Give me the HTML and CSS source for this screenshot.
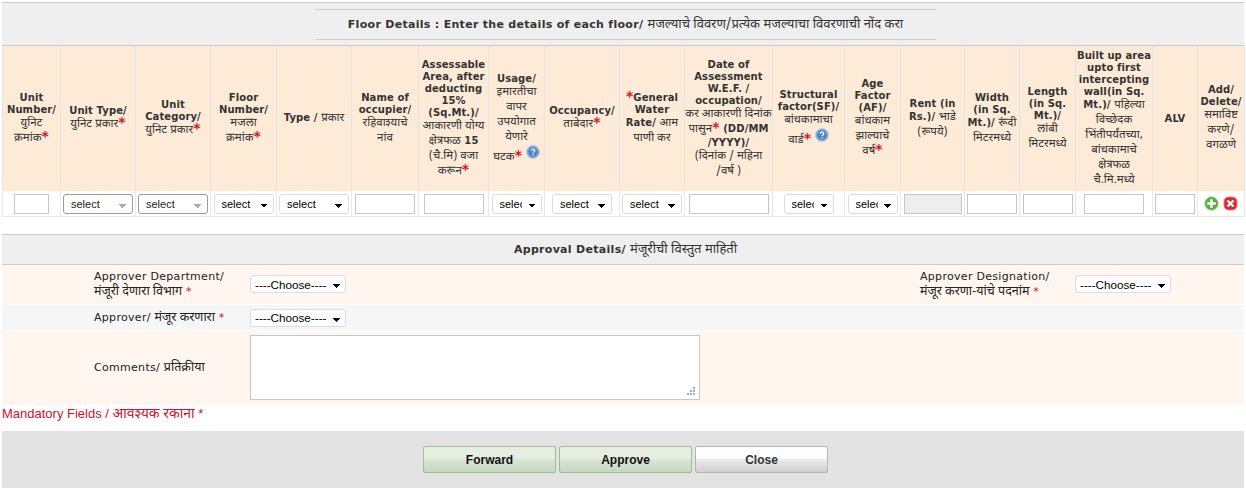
FILE: index.html
```html
<!DOCTYPE html>
<html lang="mr">
<head>
    <meta charset="UTF-8">
    <title>Floor Details</title>
    <link rel="stylesheet" href="styles.css">
</head>
<body>

<div class="band floor-band">
    <div class="band-title">Floor Details : Enter the details of each floor/ <span class="mr">मजल्याचे विवरण/प्रत्येक मजल्याचा विवरणाची नोंद करा</span></div>
</div>

<table class="floor-table">
    <colgroup>
        <col class="w58"><col class="w75"><col class="w75"><col class="w66"><col class="w75"><col class="w67">
        <col class="w70"><col class="w56"><col class="w75"><col class="w65"><col class="w88"><col class="w72">
        <col class="w56"><col class="w64"><col class="w55"><col class="w56"><col class="w77"><col class="w45"><col class="w47">
    </colgroup>
    <thead>
        <tr>
            <th>Unit Number/<br><span class="mr">युनिट<br>क्रमांक</span><b class="star">*</b></th>
            <th>Unit Type/<br><span class="mr">युनिट प्रकार</span><b class="star">*</b></th>
            <th>Unit Category/<br><span class="mr">युनिट प्रकार</span><b class="star">*</b></th>
            <th>Floor Number/<br><span class="mr">मजला<br>क्रमांक</span><b class="star">*</b></th>
            <th>Type / <span class="mr">प्रकार</span></th>
            <th>Name of occupier/<br><span class="mr">रहिवाश्याचे<br>नांव</span></th>
            <th>Assessable Area, after deducting 15% (Sq.Mt.)/<br><span class="mr">आकारणी योग्य<br>क्षेत्रफळ</span> 15<br><span class="mr">(चै.मि) वजा<br>करून</span><b class="star">*</b></th>
            <th>Usage/<br><span class="mr">इमारतीचा<br>वापर<br>उपयोगात<br>येणारे<br>घटक</span><b class="star">*</b>
                <svg class="help" viewBox="0 0 14 14"><circle cx="7" cy="7" r="6.5" fill="#7ea6d8" stroke="#b9cfe8"/><circle cx="7" cy="7" r="4.6" fill="#4f83c4"/><path d="M5.3 5.6c.2-1 .9-1.4 1.8-1.4 1 0 1.7.6 1.7 1.4 0 1.2-1.6 1.2-1.6 2.4" fill="none" stroke="#fff" stroke-width="1.2"/><rect x="6.5" y="8.9" width="1.3" height="1.3" fill="#fff"/></svg>
            </th>
            <th>Occupancy/<br><span class="mr">ताबेदार</span><b class="star">*</b></th>
            <th><b class="star">*</b>General Water Rate/ <span class="mr">आम<br>पाणी कर</span></th>
            <th>Date of Assessment W.E.F. / occupation/<br><span class="mr">कर आकारणी दिनांक<br>पासुन</span><b class="star">*</b> (DD/MM<br>/YYYY)/<br><span class="mr">(दिनांक / महिना<br>/वर्ष )</span></th>
            <th>Structural factor(SF)/<br><span class="mr">बांधकामाचा<br>वार्ड</span><b class="star">*</b>
                <svg class="help" viewBox="0 0 14 14"><circle cx="7" cy="7" r="6.5" fill="#7ea6d8" stroke="#b9cfe8"/><circle cx="7" cy="7" r="4.6" fill="#4f83c4"/><path d="M5.3 5.6c.2-1 .9-1.4 1.8-1.4 1 0 1.7.6 1.7 1.4 0 1.2-1.6 1.2-1.6 2.4" fill="none" stroke="#fff" stroke-width="1.2"/><rect x="6.5" y="8.9" width="1.3" height="1.3" fill="#fff"/></svg>
            </th>
            <th>Age Factor (AF)/<br><span class="mr">बांधकाम<br>झाल्याचे<br>वर्ष</span><b class="star">*</b></th>
            <th>Rent (in Rs.)/ <span class="mr">भाडे<br>(रूपये)</span></th>
            <th>Width<br>(in Sq.<br>Mt.)/ <span class="mr">रूंदी<br>मिटरमध्ये</span></th>
            <th>Length (in Sq. Mt.)/<br><span class="mr">लांबी<br>मिटरमध्ये</span></th>
            <th>Built up area upto first intercepting wall(in Sq. Mt.)/ <span class="mr">पहिल्या<br>विच्छेदक<br>भिंतीपर्यंतच्या,<br>बांधकामाचे<br>क्षेत्रफळ<br>चै.मि.मध्ये</span></th>
            <th>ALV</th>
            <th>Add/ Delete/<br><span class="mr">समाविष्ट<br>करणे/<br>वगळणे</span></th>
        </tr>
    </thead>
    <tbody>
        <tr>
            <td><input class="in w35" type="text"></td>
            <td><select class="sel w70 off" disabled><option>select</option></select></td>
            <td><select class="sel w70 off" disabled><option>select</option></select></td>
            <td><select class="sel w60"><option>select</option></select></td>
            <td><select class="sel w70"><option>select</option></select></td>
            <td><input class="in w60" type="text"></td>
            <td><input class="in w60" type="text"></td>
            <td><select class="sel w50 tight"><option>select</option></select></td>
            <td><select class="sel w60"><option>select</option></select></td>
            <td><select class="sel w60"><option>select</option></select></td>
            <td><input class="in w80" type="text"></td>
            <td><select class="sel w50 tight"><option>select</option></select></td>
            <td><select class="sel w50 tight"><option>select</option></select></td>
            <td><input class="in w58i" type="text" disabled></td>
            <td><input class="in w50i" type="text"></td>
            <td><input class="in w50i" type="text"></td>
            <td><input class="in w60" type="text"></td>
            <td><input class="in w40" type="text"></td>
            <td class="actions">
                <svg class="act" viewBox="0 0 16 16"><circle cx="8" cy="8" r="7.2" fill="#5cab45" stroke="#a6d596"/><path d="M8 3.5v9M3.5 8h9" stroke="#fff" stroke-width="2.6"/></svg>
                <svg class="act" viewBox="0 0 16 16"><rect x="1" y="1" width="14" height="14" rx="5" fill="#e0262c" stroke="#f08a8a"/><path d="M4.8 4.8l6.4 6.4M11.2 4.8l-6.4 6.4" stroke="#fff" stroke-width="2.6"/></svg>
            </td>
        </tr>
    </tbody>
</table>

<div class="band approval-band">
    <div class="band-title plain">Approval Details/ <span class="mr">मंजूरीची विस्तुत माहिती</span></div>
</div>

<table class="approval-table">
    <colgroup>
        <col class="a-gap"><col class="a-label"><col class="a-field"><col class="a-label2"><col class="a-rest">
    </colgroup>
    <tr class="row-peach">
        <td></td>
        <td>Approver Department/<br><span class="mr">मंजूरी देणारा विभाग</span> <span class="req">*</span></td>
        <td><select class="sel choose"><option>----Choose----</option></select></td>
        <td>Approver Designation/<br><span class="mr">मंजूर करणा-यांचे पदनांम</span> <span class="req">*</span></td>
        <td><select class="sel choose"><option>----Choose----</option></select></td>
    </tr>
    <tr class="row-grey">
        <td></td>
        <td>Approver/ <span class="mr">मंजूर करणारा</span> <span class="req">*</span></td>
        <td><select class="sel choose"><option>----Choose----</option></select></td>
        <td colspan="2"></td>
    </tr>
    <tr class="row-peach row-comments">
        <td></td>
        <td>Comments/ <span class="mr">प्रतिक्रीया</span></td>
        <td><textarea class="comments"></textarea></td>
        <td colspan="2"></td>
    </tr>
</table>

<p class="mandatory">Mandatory Fields / <span class="mr">आवश्यक रकाना</span> *</p>

<div class="button-bar">
    <button class="btn green" type="button">Forward</button>
    <button class="btn green" type="button">Approve</button>
    <button class="btn" type="button">Close</button>
</div>

</body>
</html>
```

FILE: styles.css
```css
* {
    box-sizing: border-box;
}

body {
    margin: 0;
    padding: 2px 2px 0;
    background: #fff;
    color: #333;
    font-family: "DejaVu Sans", Verdana, sans-serif;
    font-size: 10px;
}

.mr {
    font-family: "Noto Sans Devanagari", "Noto Sans", "DejaVu Sans", sans-serif;
    font-size: 11.5px;
    font-weight: normal;
    line-height: 15px;
    letter-spacing: 0;
}

/* title bands */
.band {
    background: #efefef;
    border-top: 1px solid #ccc;
    border-bottom: 1px solid #ccc;
    font-weight: bold;
    font-size: 11px;
    letter-spacing: 0.3px;
    text-align: center;
}

.band .mr {
    font-size: 13px;
}

.floor-band {
    height: 44px;
    padding: 6px 0 0 313px;
}

.band-title {
    width: 621px;
    height: 31px;
    border-top: 1px solid #ccc;
    border-bottom: 1px solid #ccc;
    line-height: 30px;
    color: #333;
}

.band-title.plain {
    width: auto;
    padding-left: 5px;
    border: none;
}

.approval-band {
    height: 31px;
    margin-top: 17px;
    color: #333;
}

/* floor table */
.floor-table {
    width: 1242px;
    table-layout: fixed;
    border-collapse: collapse;
}

.w58 { width: 58px; }
.w75 { width: 75px; }
.w66 { width: 66px; }
.w67 { width: 67px; }
.w70 { width: 70px; }
.w56 { width: 56px; }
.w65 { width: 65px; }
.w88 { width: 88px; }
.w72 { width: 72px; }
.w64 { width: 64px; }
.w55 { width: 55px; }
.w77 { width: 77px; }
.w45 { width: 45px; }
.w47 { width: 47px; }

.floor-table th {
    height: 145px;
    padding: 0;
    background: #fdebd8;
    border-left: 1px solid #e4e4e4;
    border-right: 1px solid #e4e4e4;
    font-size: 10px;
    letter-spacing: 0.1px;
    line-height: 12px;
    color: #333;
    text-align: center;
    vertical-align: middle;
    word-wrap: break-word;
}

.floor-table td {
    height: 25px;
    padding: 1px 0 0;
    border: 1px solid #e8e8e8;
    border-top: none;
    text-align: center;
    white-space: nowrap;
}

.star {
    color: #e0111c;
    font-size: 14px;
    line-height: 10px;
}

.help {
    width: 14px;
    height: 14px;
    vertical-align: 1px;
}

.act {
    width: 15px;
    height: 15px;
    vertical-align: middle;
}

/* form controls */
.in, .sel, .comments {
    margin: 0;
    background-color: #fff;
    border: 1px solid #c6c6c6;
    border-radius: 0;
    vertical-align: middle;
}

.in {
    height: 20px;
    padding: 0 2px;
}

.in:disabled {
    background: #eeeeee;
}

.in.w35 { width: 35px; }
.in.w60 { width: 60px; }
.in.w80 { width: 80px; }
.in.w58i { width: 58px; }
.in.w50i { width: 50px; }
.in.w40 { width: 40px; }

.sel {
    appearance: none;
    height: 20px;
    padding: 0 14px 0 7px;
    border: 1px solid #d8dde6;
    border-radius: 3px;
    color: #000;
    opacity: 1;
    font-family: "Liberation Sans", Arial, sans-serif;
    font-size: 11px;
    background-image: linear-gradient(45deg, transparent 50%, #000 50%), linear-gradient(135deg, #000 50%, transparent 50%);
    background-size: 4px 4px;
    background-repeat: no-repeat;
    background-position: calc(100% - 9px) 9px, calc(100% - 5px) 9px;
}

.sel.w50 { width: 50px; }
.sel.w60 { width: 60px; }
.sel.w70 { width: 70px; }

.sel.tight {
    padding-right: 19px;
}

.sel.off {
    border: 1px solid #9b9b9b;
    color: #222;
    background-image: linear-gradient(45deg, transparent 50%, #aaa 50%), linear-gradient(135deg, #aaa 50%, transparent 50%);
}

/* approval table */
.approval-table {
    width: 1242px;
    table-layout: fixed;
    border-collapse: collapse;
    font-size: 11px;
    letter-spacing: 0.3px;
    color: #222;
}

.approval-table .mr {
    font-size: 12.5px;
}

.a-gap { width: 92px; }
.a-label { width: 156px; }
.a-field { width: 670px; }
.a-label2 { width: 155px; }
.a-rest { width: 169px; }

.approval-table td {
    padding: 0;
    border-bottom: 1px solid #fff;
    line-height: 15px;
}

.row-peach td {
    background: #fff6ef;
}

.row-grey td {
    height: 26px;
    background: #f6f6f6;
}

.row-peach:first-child td {
    height: 40px;
}

.row-comments td {
    height: 74px;
    border-bottom: none;
}

.row-comments td:last-child {
    border-top: 1px solid #f6f6f6;
}

.sel.choose {
    width: 96px;
    height: 18px;
    padding-left: 4px;
    font-size: 11.7px;
    background-position: calc(100% - 8px) 8px, calc(100% - 4px) 8px;
}

.comments {
    display: block;
    width: 450px;
    height: 65px;
    resize: none;
    background-color: #fff;
    background-image:
        linear-gradient(#aaa, #aaa), linear-gradient(#aaa, #aaa), linear-gradient(#aaa, #aaa),
        linear-gradient(#aaa, #aaa), linear-gradient(#aaa, #aaa), linear-gradient(#aaa, #aaa);
    background-size: 2px 2px;
    background-repeat: no-repeat;
    background-position:
        right 4px bottom 4px, right 7px bottom 4px, right 10px bottom 4px,
        right 4px bottom 7px, right 7px bottom 7px, right 4px bottom 10px;
}

.req {
    color: #d0112b;
}

.mandatory {
    margin: 0;
    height: 26px;
    padding-top: 1px;
    color: #d0112b;
    font-family: "Liberation Sans", Arial, sans-serif;
    font-size: 13px;
    line-height: 16px;
}

.mandatory .mr {
    font-size: 14px;
}

/* buttons */
.button-bar {
    display: flex;
    justify-content: center;
    gap: 3px;
    height: 57px;
    padding: 15px 0 0 5px;
    background: #e3e3e3;
}

.btn {
    width: 133px;
    height: 27px;
    padding: 2px 0 0;
    border: 1px solid #b5b5b5;
    border-radius: 2px;
    background: linear-gradient(#fdfdfd 50%, #ececec 50%, #cfcfcf);
    color: #333;
    font-family: "Liberation Sans", Arial, sans-serif;
    font-size: 12px;
    font-weight: bold;
    cursor: pointer;
}

.btn.green {
    border-color: #9cbf98;
    background: linear-gradient(#e6eee2 50%, #d9e6d4 50%, #c6d8c1);
    color: #111;
}
```
